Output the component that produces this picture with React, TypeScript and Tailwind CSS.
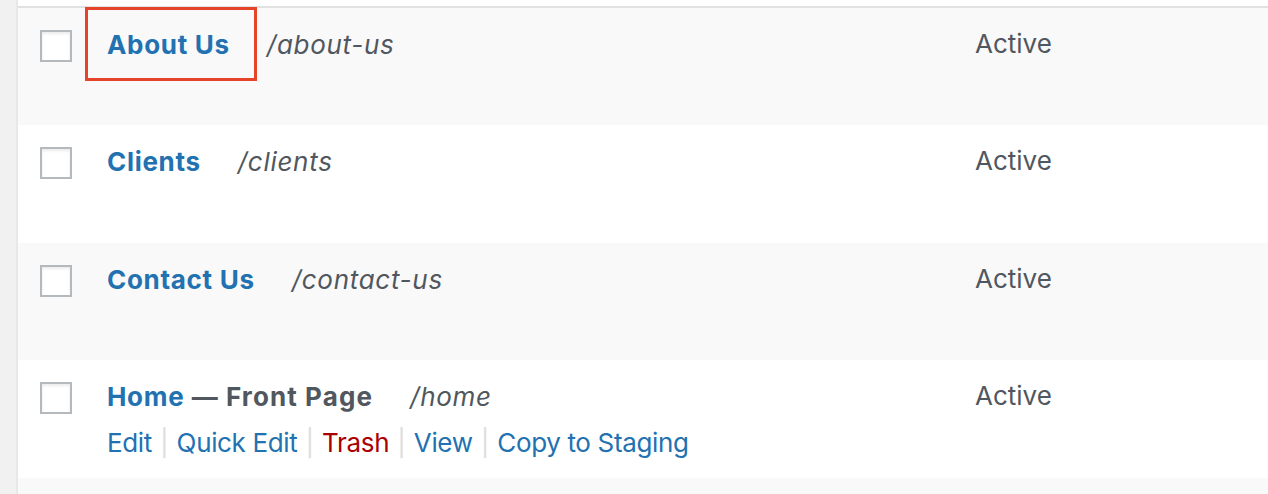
import React from "react";

const font = { fontFamily: "Inter, 'Noto Sans', sans-serif" };

function Checkbox() {
  return (
    <div className="w-[32px] h-[32px] bg-white border-2 border-[#b4b9be] shadow-[inset_0_2px_3px_rgba(0,0,0,0.08)]" />
  );
}

type Row = {
  title: string;
  suffix?: string;
  path: string;
  bg: string;
  h: string;
  highlight?: boolean;
  actions?: boolean;
};

const rows: Row[] = [
  { title: "About Us", path: "/about-us", bg: "bg-[#f9f9f9]", h: "h-[117px]", highlight: true },
  { title: "Clients", path: "/clients", bg: "bg-white", h: "h-[118px]" },
  { title: "Contact Us", path: "/contact-us", bg: "bg-[#f9f9f9]", h: "h-[117px]" },
  { title: "Home", suffix: " — Front Page", path: "/home", bg: "bg-white", h: "h-[118px]", actions: true },
];

function Sep() {
  return <span className="text-[#dddddd] mx-[8px] tracking-normal">|</span>;
}

export default function App() {
  return (
    <div className="w-[1268px] h-[494px] flex bg-[#f9f9f9] overflow-hidden" style={font}>
      <div className="w-[16px] shrink-0 bg-[#f1f1f1] border-r-2 border-[#e8e8e8] box-content" />
      <div className="flex-1 flex flex-col">
        <div className="h-[6px] bg-white shrink-0" />
        <div className="h-[2px] bg-[#e1e1e1] shrink-0" />
        {rows.map((r) => (
          <div key={r.title} className={`${r.bg} ${r.h} flex shrink-0 relative`}>
            <div className="w-[89px] shrink-0 pl-[22px] pt-[22px]">
              <Checkbox />
            </div>
            <div className="flex-1 pt-[19px]">
              <div className="flex items-center h-[36px] text-[26px] leading-[36px]">
                <span className="font-bold text-[#2271b1] tracking-[0.7px]">{r.title}</span>
                {r.suffix && (
                  <span className="font-bold text-[#50575e] whitespace-pre tracking-[1.1px]">{r.suffix}</span>
                )}
                <span className="italic text-[#50575e] ml-[37px] tracking-[0.7px]">{r.path}</span>
              </div>
              {r.actions && (
                <div className="mt-[10px] h-[36px] flex items-center text-[26px] leading-[36px] text-[#2271b1] tracking-[-0.35px]">
                  <span>Edit</span>
                  <Sep />
                  <span>Quick Edit</span>
                  <Sep />
                  <span className="text-[#a00]">Trash</span>
                  <Sep />
                  <span>View</span>
                  <Sep />
                  <span>Copy to Staging</span>
                </div>
              )}
            </div>
            <div className="w-[293px] shrink-0 pt-[18px]">
              <div className="h-[36px] text-[26px] leading-[36px] text-[#50575e]">Active</div>
            </div>
            {r.highlight && (
              <div className="absolute left-[67px] top-[-1px] w-[172px] h-[74px] border-[3px] border-[#e5432c]" />
            )}
          </div>
        ))}
        <div className="flex-1 bg-[#f9f9f9]" />
      </div>
    </div>
  );
}
